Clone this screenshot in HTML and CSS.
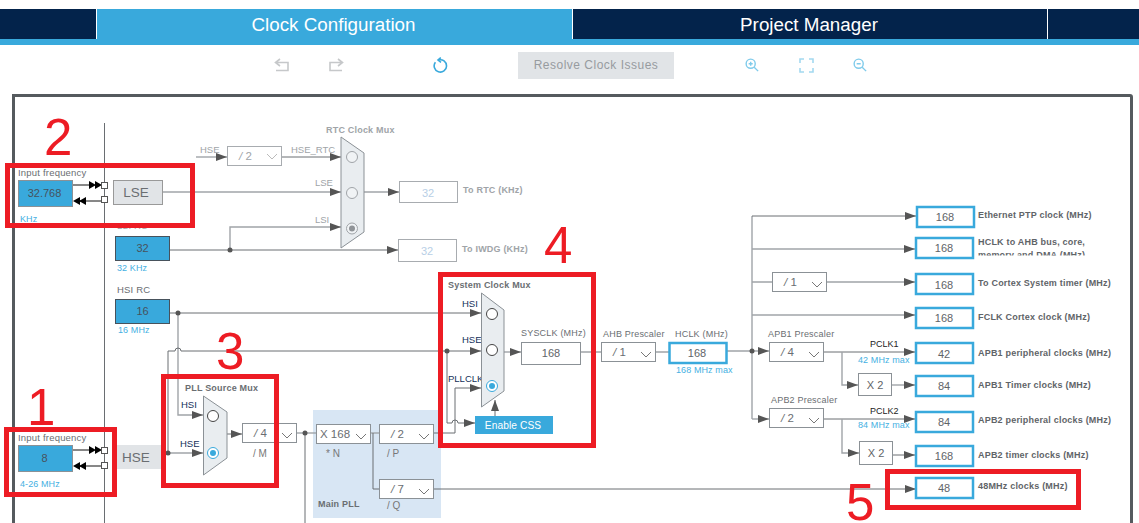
FILE: index.html
```html
<!DOCTYPE html>
<html lang="en">
<head>
  <meta charset="UTF-8">
  <title>Clock Configuration</title>
  <link rel="stylesheet" href="styles.css">
</head>
<body>
  <div class="abas">
    <div class="aba aba-vazia"></div>
    <div class="aba aba-ativa">Clock Configuration</div>
    <div class="aba aba-projeto">Project Manager</div>
    <div class="aba aba-resto"></div>
  </div>

  <div class="barra">
    <svg class="ico ico-undo" width="16" height="14" viewBox="0 0 16 14"><path d="M6 1L1.500 4.500L6 8M2 4.500H14V12.500H2"/></svg>
    <svg class="ico ico-redo" width="16" height="14" viewBox="0 0 16 14"><path d="M10 1L14.500 4.500L10 8M14 4.500H2V12.500H14"/></svg>
    <svg class="ico ico-refresh" width="16" height="16" viewBox="0 0 16 16"><path d="M3.400 5.200A6.200 6.200 0 1 0 6.500 3M8.800 0.600L6 3L9 5.400"/></svg>
    <div class="resolver">Resolve Clock Issues</div>
    <svg class="ico ico-mais" width="14" height="14" viewBox="0 0 16 16"><circle cx="6.500" cy="6.500" r="5.200"/><path d="M10.500 10.500L15 15M4.200 6.500H8.800M6.500 4.200V8.800"/></svg>
    <svg class="ico ico-fit" width="15" height="15" viewBox="0 0 15 15"><path d="M1 5V1H5M10 1H14V5M14 10V14H10M5 14H1V10"/></svg>
    <svg class="ico ico-menos" width="14" height="14" viewBox="0 0 16 16"><circle cx="6.500" cy="6.500" r="5.200"/><path d="M10.500 10.500L15 15M4.200 6.500H8.800"/></svg>
  </div>

  <div class="diagrama">
    <svg class="arvore" width="1115" height="430" viewBox="15 97 1115 430">
      <defs>
        <marker id="seta" markerUnits="userSpaceOnUse" markerWidth="11" markerHeight="8" refX="11" refY="4" orient="auto"><path d="M0 0L11 4L0 8Z" fill="#555"/></marker>
      </defs>

      <!-- fundo do PLL -->
      <rect class="pll-fundo" x="313" y="410" width="128" height="108"/>
      <line class="fio" x1="104.500" y1="123" x2="104.500" y2="530"/>

      <!-- fios RTC -->
      <path class="fio-claro" d="M196 157H227" marker-end="url(#seta)"/>
      <path class="fio" d="M282 157H341" marker-end="url(#seta)"/>
      <path class="fio-claro" d="M163 192H341" marker-end="url(#seta)"/>
      <path class="fio-claro" d="M230 250V227H341" marker-end="url(#seta)"/>
      <path class="fio" d="M170 250H398" marker-end="url(#seta)"/>
      <path class="fio-claro" d="M364 192H399" marker-end="url(#seta)"/>

      <!-- fios HSI / HSE / PLL -->
      <path class="fio" d="M170 313H481" marker-end="url(#seta)"/>
      <path class="fio-claro" d="M178 313V415H203" marker-end="url(#seta)"/>
      <path class="fio" d="M168 453V351H175a3 3 0 0 1 6 0H481" marker-end="url(#seta)"/>
      <path class="fio-claro" d="M161 453H203" marker-end="url(#seta)"/>
      <path class="fio" d="M227 434H242" marker-end="url(#seta)"/>
      <path class="fio-claro" d="M297 433H316"/>
      <line class="fio" x1="305" y1="433" x2="305" y2="530"/>
      <path class="fio-claro" d="M371 433H379"/>
      <path class="fio" d="M373 433V489H379"/>
      <path class="fio" d="M434 433H455V388H481" marker-end="url(#seta)"/>
      <path class="fio" d="M434 489H916" marker-end="url(#seta)"/>
      <path class="fio" d="M447 351V423H452a3 3 0 0 1 6 0H475" marker-end="url(#seta)"/>
      <path class="fio" d="M495 416V400" marker-end="url(#seta)"/>

      <!-- fios saida -->
      <path class="fio-claro" d="M504 352H521" marker-end="url(#seta)"/>
      <path class="fio-claro" d="M581 352H601M656 352H669M727 351H752"/>
      <path class="fio-claro" d="M752 351H769" marker-end="url(#seta)"/>
      <path class="fio-claro" d="M752 419V216"/>
      <path class="fio" d="M752 216H916" marker-end="url(#seta)"/>
      <path class="fio-claro" d="M752 249H915" marker-end="url(#seta)"/>
      <path class="fio-claro" d="M752 282H772M827 282H915" marker-end="url(#seta)"/>
      <path class="fio-claro" d="M752 315H915" marker-end="url(#seta)"/>
      <path class="fio" d="M824 352H915" marker-end="url(#seta)"/>
      <path class="fio-claro" d="M842 352V385H858" marker-end="url(#seta)"/>
      <path class="fio-claro" d="M892 385H915" marker-end="url(#seta)"/>
      <path class="fio-claro" d="M752 419H769" marker-end="url(#seta)"/>
      <path class="fio" d="M824 419H915" marker-end="url(#seta)"/>
      <path class="fio-claro" d="M842 419V453H859" marker-end="url(#seta)"/>
      <path class="fio" d="M893 455H915" marker-end="url(#seta)"/>

      <!-- pontos -->
      <circle class="ponto" cx="230" cy="250" r="2.500"/>
      <circle class="ponto" cx="178" cy="313" r="2.500"/>
      <circle class="ponto" cx="168" cy="453" r="2.500"/>
      <circle class="ponto" cx="305" cy="433" r="2.500"/>
      <circle class="ponto" cx="447" cy="351" r="2.500"/>
      <circle class="ponto" cx="752" cy="351" r="2.500"/>

      <!-- entradas -->
      <text class="rotulo-entrada" x="18" y="176">Input frequency</text>
      <rect class="entrada" x="18.500" y="180.500" width="54" height="26"/>
      <text class="valor" x="44.500" y="197">32.768</text>
      <text class="info" x="20" y="222">KHz</text>
      <path class="fio-preto" d="M73 185H91M105 201H79"/>
      <path class="seta-preta" d="M89 181L96 185L89 189ZM95 181L102 185L95 189ZM86 197L79 201L86 205ZM80 197L73 201L80 205Z"/>
      <rect class="porta" x="101.500" y="182.500" width="6" height="6"/>
      <rect class="porta" x="101.500" y="196.500" width="6" height="6"/>
      <rect class="caixa-cinza" x="113.500" y="180.500" width="49" height="24"/>
      <text class="oscilador" x="136" y="197">LSE</text>

      <text class="rotulo-entrada" x="18" y="441">Input frequency</text>
      <rect class="entrada" x="18.500" y="445.500" width="54" height="26"/>
      <text class="valor" x="44.500" y="462">8</text>
      <text class="info" x="20" y="487">4-26 MHz</text>
      <path class="fio-preto" d="M73 450H91M105 466H79"/>
      <path class="seta-preta" d="M89 446L96 450L89 454ZM95 446L102 450L95 454ZM86 462L79 466L86 470ZM80 462L73 466L80 470Z"/>
      <rect class="porta" x="101.500" y="447.500" width="6" height="6"/>
      <rect class="porta" x="101.500" y="462.500" width="6" height="6"/>
      <rect class="caixa-hse" x="113" y="445" width="48" height="24"/>
      <text class="oscilador" x="136" y="462">HSE</text>

      <text class="rotulo-claro" x="117" y="229">LSI RC</text>
      <rect class="oscilador-rc" x="115.500" y="236.500" width="54" height="24"/>
      <text class="valor" x="142.500" y="252">32</text>
      <text class="info" x="117" y="271">32 KHz</text>

      <text class="rotulo-entrada" x="117" y="293">HSI RC</text>
      <rect class="oscilador-rc" x="115.500" y="299.500" width="54" height="24"/>
      <text class="valor" x="142.500" y="315">16</text>
      <text class="info" x="118" y="333">16 MHz</text>

      <!-- RTC -->
      <text class="titulo-claro" x="326" y="133">RTC Clock Mux</text>
      <text class="rotulo-claro" x="200" y="153">HSE</text>
      <text class="rotulo-claro" x="291" y="153">HSE_RTC</text>
      <text class="rotulo-claro" x="315" y="186">LSE</text>
      <text class="rotulo-claro" x="315" y="223">LSI</text>
      <rect class="select-claro" x="227.500" y="146.500" width="54" height="19"/>
      <text class="select-txt-claro" x="239" y="160"><tspan class="barra-it">/</tspan> 2</text>
      <path class="seta-select-claro" d="M267 154L272 159L277 154"/>
      <polygon class="mux" points="341,137 364,153 364,232 341,248"/>
      <circle class="radio-claro" cx="352" cy="157" r="5.500"/>
      <circle class="radio-claro" cx="352" cy="193" r="5.500"/>
      <circle class="radio-claro" cx="352" cy="228.500" r="5.500"/>
      <circle class="miolo-claro" cx="352" cy="228.500" r="3"/>
      <rect class="saida-clara" x="399.500" y="181.500" width="58" height="21"/>
      <text class="valor-claro" x="428" y="197">32</text>
      <text class="titulo-claro" x="463" y="193">To RTC (KHz)</text>
      <rect class="saida-clara" x="398.500" y="239.500" width="58" height="22"/>
      <text class="valor-claro" x="427" y="255">32</text>
      <text class="titulo-claro" x="462" y="252">To IWDG (KHz)</text>

      <!-- PLL source -->
      <text class="titulo" x="185" y="391">PLL Source Mux</text>
      <text class="sinal" x="181" y="408">HSI</text>
      <text class="sinal" x="180" y="447">HSE</text>
      <polygon class="mux" points="203.500,396 227,412 227,458 203.500,475"/>
      <circle class="radio" cx="213" cy="416" r="5.500"/>
      <circle class="radio-on" cx="213" cy="453" r="5.500"/>
      <circle class="miolo" cx="213" cy="453" r="3"/>
      <rect class="select" x="242.500" y="423.500" width="54" height="19"/>
      <text class="select-txt" x="254" y="437"><tspan class="barra-it">/</tspan> 4</text>
      <path class="seta-select" d="M282 433L287 438L292 433"/>
      <text class="nota" x="253" y="457">/ M</text>

      <rect class="select" x="316.500" y="424.500" width="54" height="19"/>
      <text class="select-txt" x="320" y="438">X 168</text>
      <path class="seta-select" d="M356 434L361 439L366 434"/>
      <text class="nota" x="326" y="457">* N</text>
      <rect class="select" x="379.500" y="424.500" width="54" height="19"/>
      <text class="select-txt" x="391" y="438"><tspan class="barra-it">/</tspan> 2</text>
      <path class="seta-select" d="M419 434L424 439L429 434"/>
      <text class="nota" x="387" y="457">/ P</text>
      <rect class="select" x="379.500" y="479.500" width="54" height="19"/>
      <text class="select-txt" x="391" y="493"><tspan class="barra-it">/</tspan> 7</text>
      <path class="seta-select" d="M419 489L424 494L429 489"/>
      <text class="nota" x="387" y="509">/ Q</text>
      <text class="titulo" x="318" y="507">Main PLL</text>

      <!-- system mux -->
      <text class="titulo" x="448" y="288">System Clock Mux</text>
      <text class="sinal" x="462" y="307">HSI</text>
      <text class="sinal" x="462" y="343">HSE</text>
      <text class="sinal" x="448" y="382">PLLCLK</text>
      <polygon class="mux" points="481.500,293 504,310 504,391 481.500,407"/>
      <circle class="radio" cx="492" cy="314" r="5.500"/>
      <circle class="radio" cx="492" cy="350" r="5.500"/>
      <circle class="radio-on" cx="492" cy="386" r="5.500"/>
      <circle class="miolo" cx="492" cy="386" r="3"/>
      <rect class="botao-css" x="475" y="416" width="78" height="18"/>
      <text class="botao-txt" x="513" y="429">Enable CSS</text>

      <!-- sysclk ate hclk -->
      <text class="rotulo" x="521" y="336">SYSCLK (MHz)</text>
      <rect class="select" x="521.500" y="342.500" width="59" height="22"/>
      <text class="valor-preto" x="551" y="357">168</text>
      <text class="rotulo" x="603" y="337">AHB Prescaler</text>
      <rect class="select" x="601.500" y="342.500" width="54" height="19"/>
      <text class="select-txt" x="613" y="356"><tspan class="barra-it">/</tspan> 1</text>
      <path class="seta-select" d="M641 352L646 357L651 352"/>
      <text class="rotulo" x="675" y="337">HCLK (MHz)</text>
      <rect class="saida" x="669.500" y="343" width="57" height="20"/>
      <text class="valor-preto" x="697" y="357">168</text>
      <text class="info" x="676" y="373">168 MHz max</text>

      <!-- prescalers -->
      <rect class="select" x="772.500" y="272.500" width="54" height="19"/>
      <text class="select-txt" x="784" y="286"><tspan class="barra-it">/</tspan> 1</text>
      <path class="seta-select" d="M812 282L817 287L822 282"/>
      <text class="rotulo" x="768" y="337">APB1 Prescaler</text>
      <rect class="select" x="769.500" y="342.500" width="54" height="19"/>
      <text class="select-txt" x="781" y="356"><tspan class="barra-it">/</tspan> 4</text>
      <path class="seta-select" d="M809 352L814 357L819 352"/>
      <text class="sinal-preto" x="870" y="347">PCLK1</text>
      <text class="info" x="858" y="363">42 MHz max</text>
      <rect class="select" x="858.500" y="373.500" width="33" height="22"/>
      <text class="valor-preto" x="875" y="389">X 2</text>

      <text class="rotulo" x="771" y="403">APB2 Prescaler</text>
      <rect class="select" x="769.500" y="408.500" width="54" height="19"/>
      <text class="select-txt" x="781" y="422"><tspan class="barra-it">/</tspan> 2</text>
      <path class="seta-select" d="M809 418L814 423L819 418"/>
      <text class="sinal-preto" x="870" y="414">PCLK2</text>
      <text class="info" x="858" y="428">84 MHz max</text>
      <rect class="select" x="859.500" y="441.500" width="33" height="23"/>
      <text class="valor-preto" x="876" y="457">X 2</text>

      <!-- saidas -->
      <rect class="saida" x="917" y="207" width="57" height="20"/>
      <text class="valor-preto" x="945" y="221">168</text>
      <text class="titulo-saida" x="978" y="218">Ethernet PTP clock (MHz)</text>

      <rect class="saida" x="916" y="238" width="57" height="20"/>
      <text class="valor-preto" x="944" y="252">168</text>
      <text class="titulo-saida" x="978" y="245">HCLK to AHB bus, core,</text>
      <svg x="978" y="248" width="140" height="7.500" viewBox="978 248 140 7.500"><text class="titulo-saida" x="978" y="258">memory and DMA (MHz)</text></svg>

      <rect class="saida" x="916" y="274" width="57" height="20"/>
      <text class="valor-preto" x="944" y="289">168</text>
      <text class="titulo-saida" x="978" y="286">To Cortex System timer (MHz)</text>

      <rect class="saida" x="916" y="308" width="57" height="20"/>
      <text class="valor-preto" x="944" y="322">168</text>
      <text class="titulo-saida" x="978" y="320">FCLK Cortex clock (MHz)</text>

      <rect class="saida" x="916" y="343" width="57" height="20"/>
      <text class="valor-preto" x="944" y="358">42</text>
      <text class="titulo-saida" x="978" y="356">APB1 peripheral clocks (MHz)</text>

      <rect class="saida" x="916" y="376" width="57" height="20"/>
      <text class="valor-preto" x="944" y="390">84</text>
      <text class="titulo-saida" x="978" y="388">APB1 Timer clocks (MHz)</text>

      <rect class="saida" x="916" y="412" width="57" height="20"/>
      <text class="valor-preto" x="944" y="426">84</text>
      <text class="titulo-saida" x="978" y="423">APB2 peripheral clocks (MHz)</text>

      <rect class="saida" x="916" y="446" width="57" height="20"/>
      <text class="valor-preto" x="944" y="460">168</text>
      <text class="titulo-saida" x="978" y="458">APB2 timer clocks (MHz)</text>

      <rect class="saida" x="916" y="478" width="57" height="20"/>
      <text class="valor-preto" x="944" y="492">48</text>
      <text class="titulo-saida" x="978" y="489">48MHz clocks (MHz)</text>

      <!-- marcacoes vermelhas -->
      <rect class="marca" x="7.500" y="165.500" width="185" height="60"/>
      <rect class="marca" x="6.500" y="429.500" width="108" height="65"/>
      <rect class="marca" x="163.500" y="376.500" width="113" height="109"/>
      <rect class="marca" x="440.500" y="274.500" width="153" height="171"/>
      <rect class="marca" x="887.500" y="471.500" width="191" height="36"/>
      <text class="numero" x="27" y="425">1</text>
      <text class="numero" x="44" y="155">2</text>
      <text class="numero" x="216" y="369">3</text>
      <text class="numero" x="544" y="263">4</text>
      <text class="numero" x="846" y="520">5</text>
    </svg>
  </div>
</body>
</html>
```

FILE: styles.css
```css
html, body {
  margin: 0;
  height: 523px;
  overflow: hidden;
  background-color: #ffffff;
  font-family: 'Liberation Sans', Arial, sans-serif;
}

/* abas */
.abas {
  display: flex;
  margin-top: 9px;
  height: 30px;
  background-color: #03234b;
  border-bottom: 6px solid #39a9dc;
}

.aba {
  box-sizing: border-box;
  color: #ffffff;
  font-size: 18.8px;
  line-height: 32px;
  text-align: center;
}

.aba-vazia {
  width: 97px;
  border-right: 1px solid #ffffff;
}

.aba-ativa {
  width: 475px;
  padding-right: 2px;
  background-color: #39a9dc;
}

.aba-projeto {
  width: 476px;
  padding-right: 2px;
  border-left: 1px solid #ffffff;
  border-right: 1px solid #ffffff;
}

.aba-resto {
  flex: 1;
}

/* barra de ferramentas */
.barra {
  position: relative;
  height: 49px;
}

.ico {
  position: absolute;
  fill: none;
  stroke-width: 1.6;
}

.ico-undo { left: 274px; top: 13px; stroke: #c6c8ca; }
.ico-redo { left: 328px; top: 13px; stroke: #c6c8ca; }
.ico-refresh { left: 432px; top: 12px; stroke: #39a9dc; }
.ico-mais { left: 745px; top: 13px; stroke: #7fcbeb; }
.ico-fit { left: 799px; top: 13px; stroke: #a3d9f0; }
.ico-menos { left: 853px; top: 13px; stroke: #7fcbeb; }

.resolver {
  position: absolute;
  left: 518px;
  top: 7px;
  width: 156px;
  height: 27px;
  background-color: #e1e4e7;
  color: #979b9f;
  font-size: 12px;
  letter-spacing: 0.5px;
  line-height: 27px;
  text-align: center;
}

/* diagrama */
.diagrama {
  box-sizing: border-box;
  margin-left: 12px;
  width: 1121px;
  height: 500px;
  border: 3px solid #555a5e;
  border-top-right-radius: 3px;
}

.arvore {
  display: block;
  overflow: visible;
}

.arvore text {
  font-family: 'Liberation Sans', Arial, sans-serif;
}

.pll-fundo { fill: #d8e6f4; }

.fio, .fio-claro, .fio-preto {
  fill: none;
}

.fio { stroke: #6a6e72; stroke-width: 1; }
.fio-claro { stroke: #a0a4a8; stroke-width: 1.4; }
.fio-preto { stroke: #111; stroke-width: 1; }
.seta-preta { fill: #000; }
.ponto { fill: #555; }
.porta { fill: #fff; stroke: #555; }

.entrada { fill: #39a9dc; stroke: #8b9196; }
.oscilador-rc { fill: #39a9dc; stroke: #47525c; }
.caixa-cinza { fill: #e1e4e7; stroke: #999; }
.caixa-hse { fill: #e1e4e7; }

.select { fill: #fff; stroke: #8b9196; }
.select-claro, .saida-clara { fill: #fff; stroke: #a8acb0; }
.saida { fill: #fff; stroke: #39a9dc; stroke-width: 2.5; }
.seta-select { fill: none; stroke: #777; }
.seta-select-claro { fill: none; stroke: #bbb; }

.mux { fill: #e9edf0; stroke: #8b9196; }
.radio { fill: #fff; stroke: #444; }
.radio-on { fill: #fff; stroke: #39a9dc; }
.miolo { fill: #39a9dc; }
.radio-claro { fill: #f0f3f5; stroke: #a0a4a8; }
.miolo-claro { fill: #909498; }

.botao-css { fill: #39a9dc; }
.botao-txt { fill: #fff; font-size: 10.2px; letter-spacing: 0.1px; text-anchor: middle; }

.rotulo { fill: #6a6e72; font-size: 9px; letter-spacing: 0.2px; }
.rotulo-entrada { fill: #6a6e72; font-size: 9.5px; letter-spacing: 0.2px; }
.rotulo-claro { fill: #a0a4a8; font-size: 9.5px; }
.info { fill: #45b0e2; font-size: 9px; letter-spacing: 0.1px; }
.nota { fill: #777; font-size: 10px; }
.titulo { fill: #6a6e72; font-size: 9px; font-weight: bold; letter-spacing: 0.2px; }
.titulo-claro { fill: #a0a4a8; font-size: 9px; font-weight: bold; letter-spacing: 0.2px; }
.titulo-saida { fill: #5f6468; font-size: 9px; font-weight: bold; letter-spacing: 0.2px; }
.sinal { fill: #14305a; font-size: 9.5px; }
.sinal-preto { fill: #222; font-size: 9px; }

.valor { fill: #47525c; font-size: 11px; text-anchor: middle; }
.valor-preto { fill: #5f6468; font-size: 11px; text-anchor: middle; }
.valor-claro { fill: #b8cfe6; font-size: 11px; text-anchor: middle; }
.select-txt { fill: #6a6e72; font-size: 11.5px; }
.select-txt-claro { fill: #a0a4a8; font-size: 11.5px; }
.barra-it { font-style: italic; }
.oscilador { fill: #6a6e72; font-size: 13.5px; text-anchor: middle; }

.marca { fill: none; stroke: #ed1c24; stroke-width: 5; }
.numero { fill: #ed1c24; font-size: 51px; }
```
